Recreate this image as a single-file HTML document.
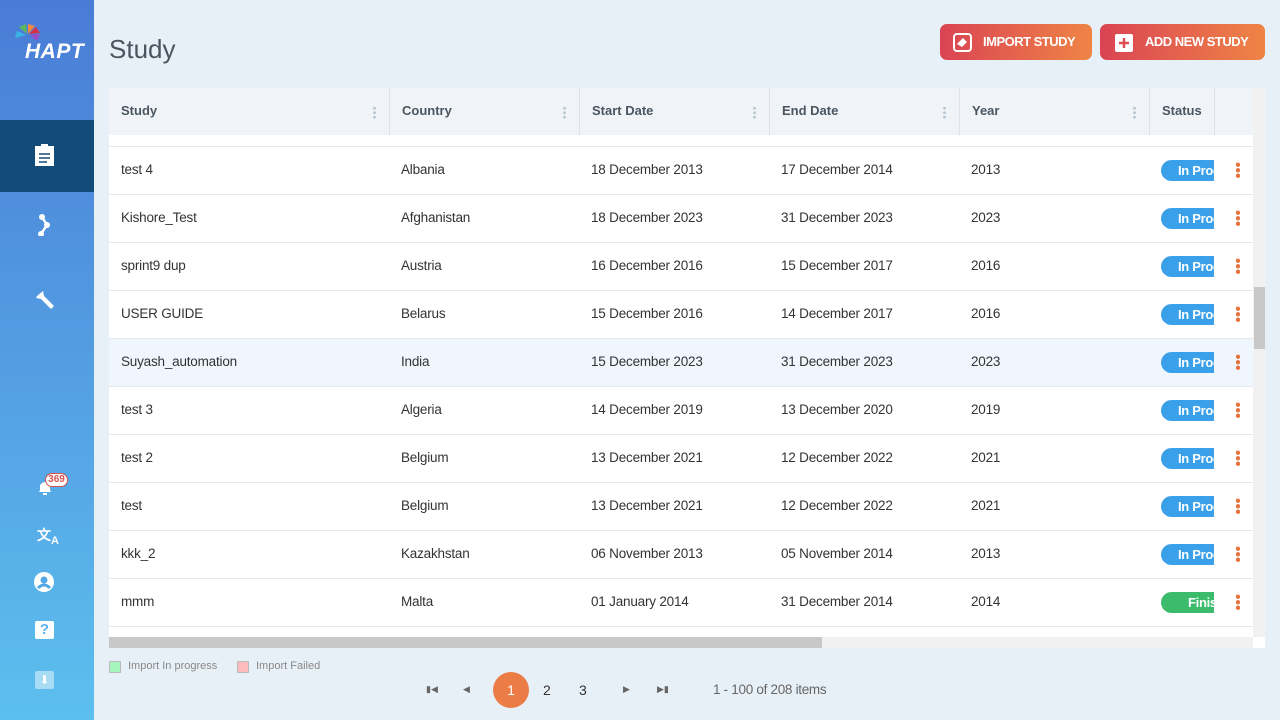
<!DOCTYPE html><html><head><meta charset="utf-8"><style>
*{margin:0;padding:0;box-sizing:border-box}
body{width:1280px;height:720px;overflow:hidden;background:#e8f0f7;font-family:"Liberation Sans",sans-serif;position:relative;color:#333}
.sb{position:absolute;left:0;top:0;width:94px;height:720px;background:linear-gradient(#4a7cd6,#5cbfee)}
.act{position:absolute;left:0;top:120px;width:94px;height:72px;background:#134b78}
.ic{position:absolute;left:33px;width:22px;height:22px}
h1{position:absolute;left:109px;top:34px;font-weight:normal;font-size:26px;color:#4a5560}
.btn{position:absolute;top:24px;height:36px;border-radius:7px;background:linear-gradient(90deg,#da4453,#ef8446);color:#fff;font-weight:bold;font-size:13px;line-height:36px;letter-spacing:-0.5px}
.tbl{position:absolute;left:109px;top:88px;width:1144px;height:549px;background:#fff;overflow:hidden}
.hd{position:absolute;left:0;top:0;height:47px;width:1144px;background:#f0f4f8}
.hc{position:absolute;top:0;height:47px;border-right:1px solid #dde3e8;font-size:13px;font-weight:bold;color:#4a5560;line-height:46px;padding-left:12px}
.hc i{position:absolute;right:13px;top:18px;width:3px;height:13px;background:radial-gradient(circle,#b8c6d2 1.3px,transparent 1.6px) 0 0/3px 4.5px}
.row{position:absolute;left:0;width:1144px;height:48px;border-bottom:1px solid #e6e9ec;font-size:13.5px;color:#333;letter-spacing:-0.2px}
.row span{position:absolute;top:15px}
.bd{position:absolute;left:1052px;top:13px;width:53px;height:21px;border-radius:11px 0 0 11px;background:#3aa0ea;color:#fff;font-weight:bold;font-size:13px;line-height:21px;padding-left:17px;overflow:hidden;white-space:nowrap;letter-spacing:-0.3px}
.dt{position:absolute;left:1127px;top:15px;width:4px;height:16px;background:radial-gradient(circle,#e8743d 2px,transparent 2.3px) 0 0/4px 5.5px}
</style></head><body>
<div class="sb"></div><div class="act"></div>
<svg style="position:absolute;left:14px;top:24px" width="30" height="22"><path d="M1 14 L12 11 L3 7Z" fill="#3ab5e6"/><path d="M5 3 L13 10 L12 0Z" fill="#5cb85c"/><path d="M14 0 L14 10 L21 2Z" fill="#f0883e"/><path d="M22 3 L15 10 L26 9Z" fill="#d9304a"/><path d="M26 10 L16 11 L23 17Z" fill="#9b4cc4"/></svg>
<div style="position:absolute;left:25px;top:40px;color:#fff;font-weight:bold;font-style:italic;font-size:21px;letter-spacing:0.5px">HAPT</div>
<svg class="ic" style="top:144px;left:35px" width="19" height="22"><rect x="0" y="2" width="19" height="20" fill="#fff"/><rect x="6" y="0" width="7" height="4" fill="#fff"/><path d="M4 10h11M4 14h11M4 18h8" stroke="#134b78" stroke-width="1.6"/></svg>
<svg class="ic" style="top:214px;left:36px" width="16" height="24"><path d="M6 3 L11 11 L5 20" stroke="#fff" stroke-width="2.5" fill="none"/><circle cx="6" cy="3" r="3" fill="#fff"/><circle cx="11" cy="11" r="3" fill="#fff"/><circle cx="5" cy="20" r="3" fill="#fff"/></svg>
<svg class="ic" style="top:289px;left:34px" width="22" height="22"><path d="M3 7 L9 2 L10 7 L20 17 L17 20 L7 10 L2 9Z" fill="#fff"/></svg>
<svg class="ic" style="top:478px;left:37px" width="16" height="18"><path d="M2 14 L3 12 L3 7 Q8 1 13 7 L13 12 L14 14Z M6 15 H10 V17 H6Z" fill="#fff"/></svg>
<div style="position:absolute;left:45px;top:473px;width:23px;height:14px;border-radius:7px;background:#fff;border:1px solid #d9534f;color:#d9534f;font-size:10px;font-weight:bold;text-align:center;line-height:12px">369</div>
<div style="position:absolute;left:37px;top:525px;color:#fff;font-size:14px;font-weight:bold">文<sub style="font-size:11px">A</sub></div>
<svg class="ic" style="top:572px;left:34px" width="20" height="20"><circle cx="10" cy="10" r="10" fill="#fff"/><circle cx="10" cy="8" r="3.5" fill="#55a8e6"/><path d="M4 16 Q10 10 16 16" stroke="#55a8e6" stroke-width="3" fill="none"/></svg>
<div style="position:absolute;left:35px;top:621px;width:19px;height:18px;background:#fff;border-radius:2px;color:#58b3ea;font-weight:bold;font-size:15px;text-align:center;line-height:18px">?</div>
<div style="position:absolute;left:35px;top:671px;width:19px;height:18px;background:#a8dcf5;border-radius:2px;color:#fff;font-size:12px;text-align:center;line-height:18px">⬇</div>
<h1>Study</h1>
<div class="btn" style="left:940px;width:152px"><svg style="position:absolute;left:13px;top:9px" width="19" height="19"><rect x="1" y="1" width="17" height="17" rx="3" fill="none" stroke="#fff" stroke-width="2"/><path d="M4 11 L10 5 L14 9 L9 14Z" fill="#fff"/></svg><span style="position:absolute;left:43px">IMPORT STUDY</span></div>
<div class="btn" style="left:1100px;width:165px"><svg style="position:absolute;left:15px;top:10px" width="19" height="19"><rect width="18" height="18" rx="2" fill="#fff"/><path d="M9 4v10M4 9h10" stroke="#dd4c50" stroke-width="2.4"/></svg><span style="position:absolute;left:45px">ADD NEW STUDY</span></div>
<div class="tbl">
<div class="hd">
<div class="hc" style="left:0;width:281px">Study<i></i></div>
<div class="hc" style="left:281px;width:190px">Country<i></i></div>
<div class="hc" style="left:471px;width:190px">Start Date<i></i></div>
<div class="hc" style="left:661px;width:190px">End Date<i></i></div>
<div class="hc" style="left:851px;width:190px">Year<i></i></div>
<div class="hc" style="left:1041px;width:65px">Status</div>
</div>
<div class="row" style="top:47px;height:12px"></div>
<div class="row" style="top:59px"><span style="left:12px">test 4</span><span style="left:292px">Albania</span><span style="left:482px">18 December 2013</span><span style="left:672px">17 December 2014</span><span style="left:862px">2013</span><div class="bd">In Progress</div><div class="dt"></div></div>
<div class="row" style="top:107px"><span style="left:12px">Kishore_Test</span><span style="left:292px">Afghanistan</span><span style="left:482px">18 December 2023</span><span style="left:672px">31 December 2023</span><span style="left:862px">2023</span><div class="bd">In Progress</div><div class="dt"></div></div>
<div class="row" style="top:155px"><span style="left:12px">sprint9 dup</span><span style="left:292px">Austria</span><span style="left:482px">16 December 2016</span><span style="left:672px">15 December 2017</span><span style="left:862px">2016</span><div class="bd">In Progress</div><div class="dt"></div></div>
<div class="row" style="top:203px"><span style="left:12px">USER GUIDE</span><span style="left:292px">Belarus</span><span style="left:482px">15 December 2016</span><span style="left:672px">14 December 2017</span><span style="left:862px">2016</span><div class="bd">In Progress</div><div class="dt"></div></div>
<div class="row" style="top:251px;background:#f0f6fd"><span style="left:12px">Suyash_automation</span><span style="left:292px">India</span><span style="left:482px">15 December 2023</span><span style="left:672px">31 December 2023</span><span style="left:862px">2023</span><div class="bd">In Progress</div><div class="dt"></div></div>
<div class="row" style="top:299px"><span style="left:12px">test 3</span><span style="left:292px">Algeria</span><span style="left:482px">14 December 2019</span><span style="left:672px">13 December 2020</span><span style="left:862px">2019</span><div class="bd">In Progress</div><div class="dt"></div></div>
<div class="row" style="top:347px"><span style="left:12px">test 2</span><span style="left:292px">Belgium</span><span style="left:482px">13 December 2021</span><span style="left:672px">12 December 2022</span><span style="left:862px">2021</span><div class="bd">In Progress</div><div class="dt"></div></div>
<div class="row" style="top:395px"><span style="left:12px">test</span><span style="left:292px">Belgium</span><span style="left:482px">13 December 2021</span><span style="left:672px">12 December 2022</span><span style="left:862px">2021</span><div class="bd">In Progress</div><div class="dt"></div></div>
<div class="row" style="top:443px"><span style="left:12px">kkk_2</span><span style="left:292px">Kazakhstan</span><span style="left:482px">06 November 2013</span><span style="left:672px">05 November 2014</span><span style="left:862px">2013</span><div class="bd">In Progress</div><div class="dt"></div></div>
<div class="row" style="top:491px"><span style="left:12px">mmm</span><span style="left:292px">Malta</span><span style="left:482px">01 January 2014</span><span style="left:672px">31 December 2014</span><span style="left:862px">2014</span><div class="bd" style="background:#3bbb6b;padding-left:27px">Finished</div><div class="dt"></div></div>
</div>
<div style="position:absolute;left:109px;top:637px;width:1144px;height:11px;background:#f1f1f1"></div>
<div style="position:absolute;left:109px;top:637px;width:713px;height:11px;background:#c8c8c8"></div>
<div style="position:absolute;left:1253px;top:88px;width:12px;height:560px;background:#f1f1f1"></div>
<div style="position:absolute;left:1254px;top:287px;width:11px;height:62px;background:#c8c8c8"></div>
<div style="position:absolute;left:1253px;top:637px;width:12px;height:11px;background:#fff"></div>
<div style="position:absolute;left:109px;top:661px;width:12px;height:12px;background:#a6f5bd;border:1px solid #bbb"></div>
<div style="position:absolute;left:128px;top:660px;font-size:11px;color:#888">Import In progress</div>
<div style="position:absolute;left:237px;top:661px;width:12px;height:12px;background:#ffbcbc;border:1px solid #bbb"></div>
<div style="position:absolute;left:256px;top:660px;font-size:11px;color:#888">Import Failed</div>
<div style="position:absolute;left:426px;top:684px;font-size:9px;color:#666">▮◀</div>
<div style="position:absolute;left:463px;top:684px;font-size:9px;color:#666">◀</div>
<div style="position:absolute;left:493px;top:672px;width:36px;height:36px;border-radius:50%;background:#ec7c45;color:#fff;font-size:14px;text-align:center;line-height:36px">1</div>
<div style="position:absolute;left:543px;top:682px;font-size:14px;color:#333">2</div>
<div style="position:absolute;left:579px;top:682px;font-size:14px;color:#333">3</div>
<div style="position:absolute;left:623px;top:684px;font-size:9px;color:#666">▶</div>
<div style="position:absolute;left:657px;top:684px;font-size:9px;color:#666">▶▮</div>
<div style="position:absolute;left:713px;top:682px;font-size:13.5px;color:#666;letter-spacing:-0.3px">1 - 100 of 208 items</div>
</body></html>
